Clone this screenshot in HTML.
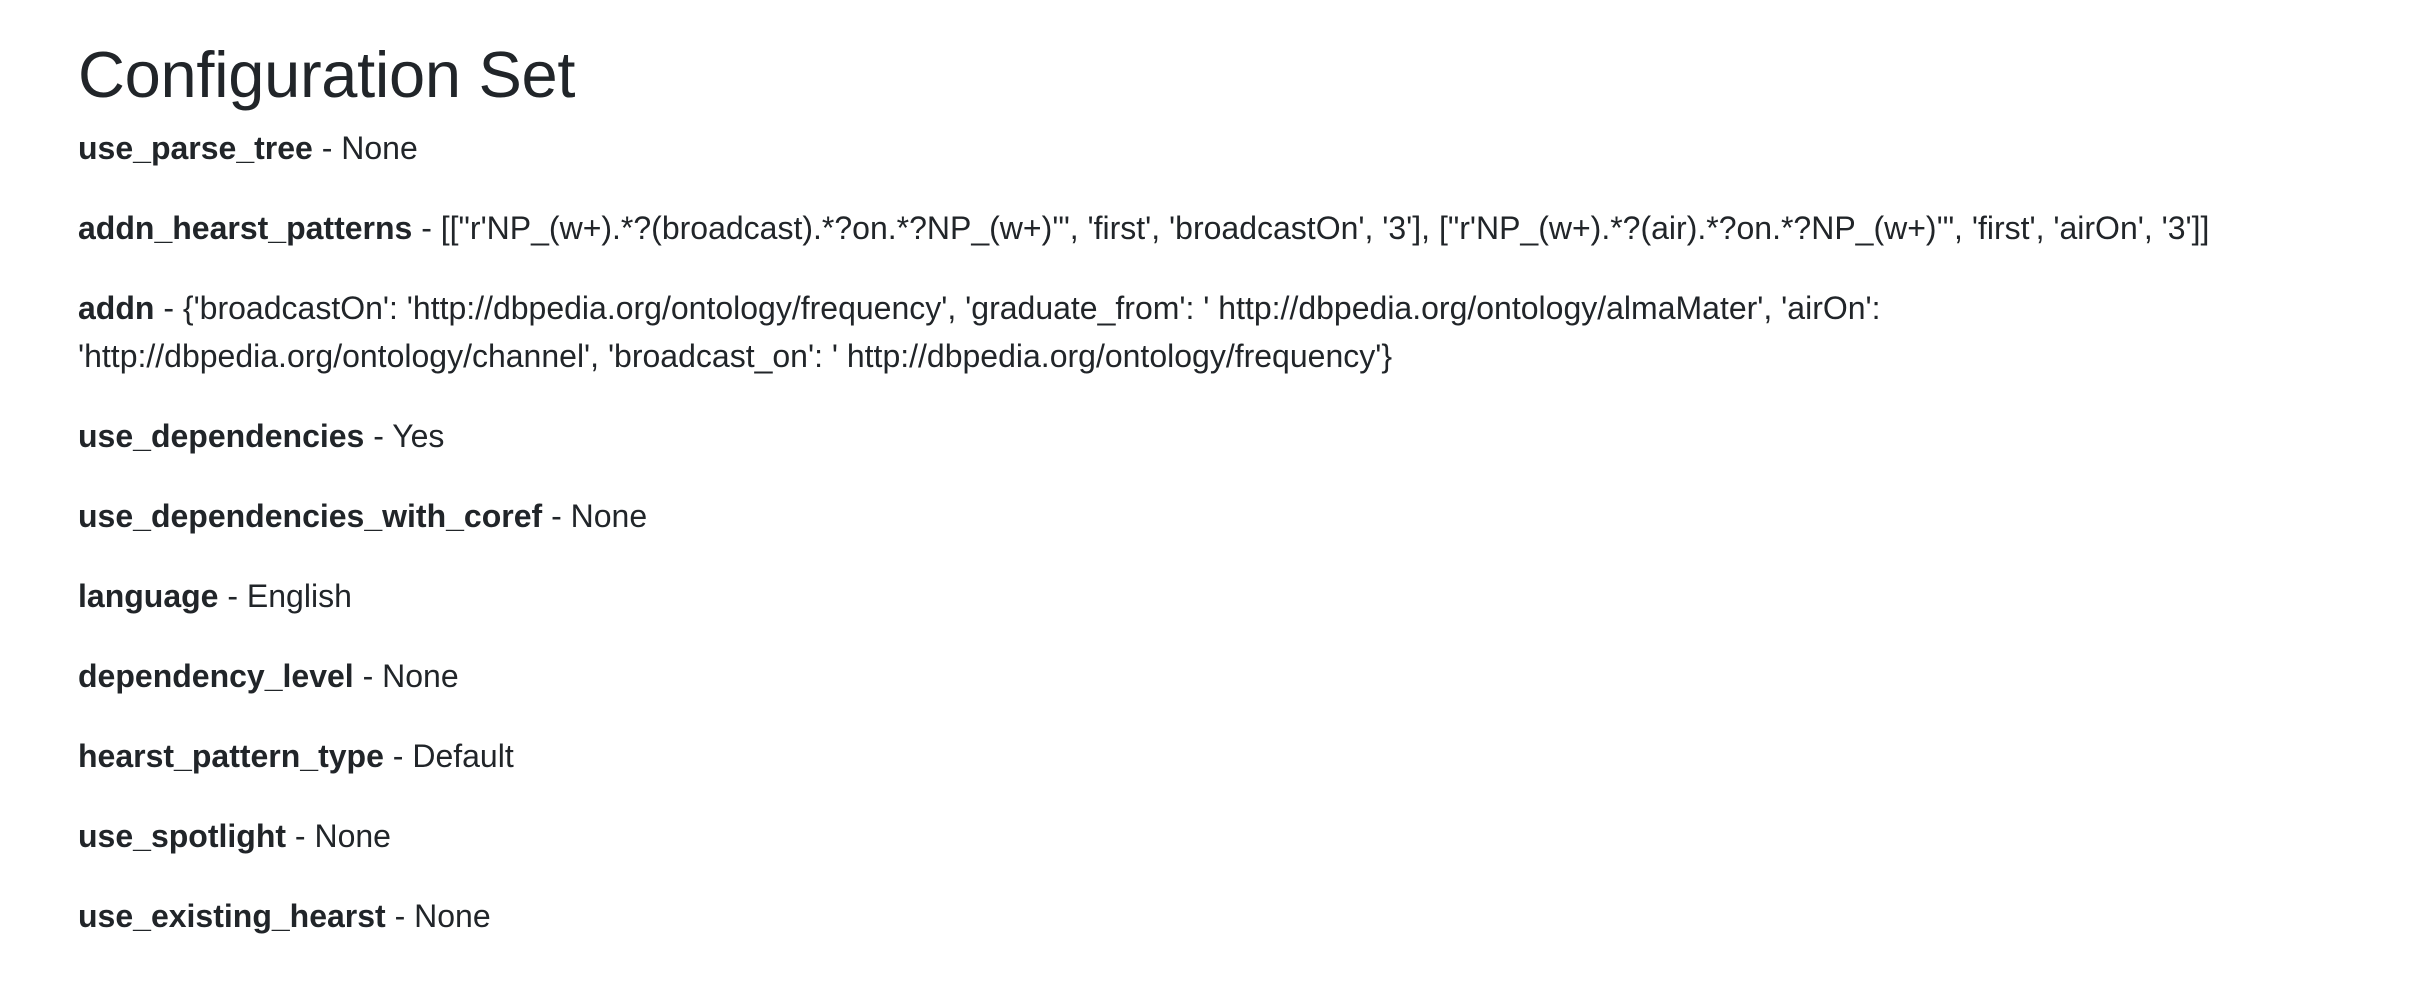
<!DOCTYPE html>
<html><head><meta charset="utf-8"><style>
html,body{margin:0;padding:0;background:#fff;}
body{width:2418px;height:1000px;overflow:hidden;font-family:"Liberation Sans",sans-serif;color:#212529;font-size:32px;line-height:48px;}
.c{position:absolute;left:78px;top:35px;right:60px;}
h1{font-size:65px;line-height:80px;font-weight:500;margin:0 0 9px 0;letter-spacing:-0.3px;}
p{margin:0 0 32px 0;}
b{font-weight:700;}
</style></head><body><div class="c">
<h1>Configuration Set</h1>
<p><b>use_parse_tree</b> - None</p>
<p><b>addn_hearst_patterns</b> - [["r'NP_(w+).*?(broadcast).*?on.*?NP_(w+)'", 'first', 'broadcastOn', '3'], ["r'NP_(w+).*?(air).*?on.*?NP_(w+)'", 'first', 'airOn', '3']]</p>
<p><b>addn</b> - {'broadcastOn': 'http://dbpedia.org/ontology/frequency', 'graduate_from': ' http://dbpedia.org/ontology/almaMater', 'airOn':<br>'http://dbpedia.org/ontology/channel', 'broadcast_on': ' http://dbpedia.org/ontology/frequency'}</p>
<p><b>use_dependencies</b> - Yes</p>
<p><b>use_dependencies_with_coref</b> - None</p>
<p><b>language</b> - English</p>
<p><b>dependency_level</b> - None</p>
<p><b>hearst_pattern_type</b> - Default</p>
<p><b>use_spotlight</b> - None</p>
<p><b>use_existing_hearst</b> - None</p>
</div></body></html>
